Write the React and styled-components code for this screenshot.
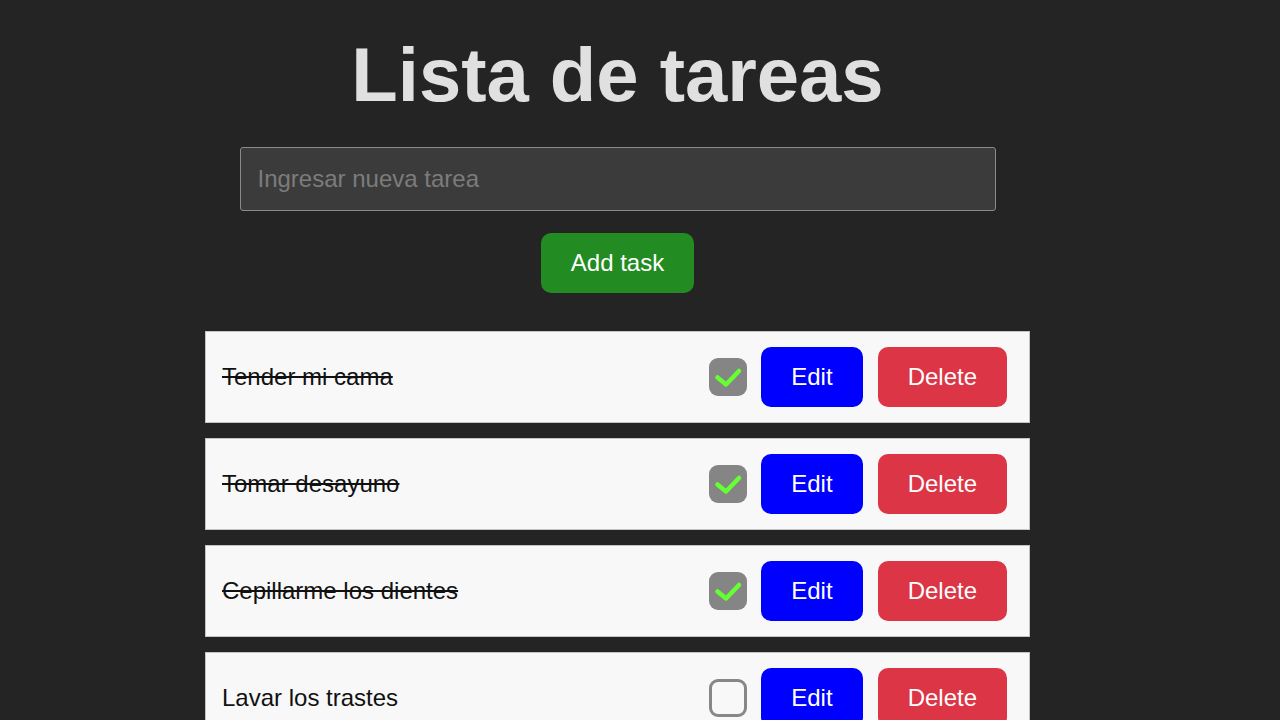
import React from 'react';
import styled, { createGlobalStyle } from 'styled-components';

const GlobalStyle = createGlobalStyle`
  body {
    margin: 0;
    background-color: #242424;
    font-family: "Liberation Sans", Arial, sans-serif;
  }
`

const Page = styled.div`
  width: 1235px;
  padding-top: 31px;
  display: flex;
  flex-direction: column;
  align-items: center;
`

const Title = styled.h1`
  margin: 0 0 29px;
  font-size: 76px;
  font-weight: bold;
  color: #e0e0e0;
  line-height: normal;
`

const TaskInput = styled.input`
  box-sizing: border-box;
  width: 756px;
  height: 64px;
  padding: 0 17px;
  background-color: #3b3b3b;
  border: 1px solid #8a8a8a;
  border-radius: 3px;
  color: #e0e0e0;
  font-family: inherit;
  font-size: 24px;
  outline: none;

  &::placeholder {
    color: #7c7c7c;
  }
`

const Button = styled.button`
  box-sizing: border-box;
  height: 60px;
  padding: 0 29px;
  border: 1px solid transparent;
  border-radius: 10px;
  background-color: ${props => props.bg};
  color: #ffffff;
  font-family: inherit;
  font-size: 24px;
  cursor: pointer;
`

const AddButton = styled(Button)`
  margin-top: 22px;
`

const TaskList = styled.ul`
  list-style: none;
  margin: 38px 0 0;
  padding: 0;
  display: flex;
  flex-direction: column;
  gap: 15px;
`

const TaskItem = styled.li`
  box-sizing: border-box;
  width: 825px;
  height: 92px;
  padding: 0 22px 0 16px;
  display: flex;
  align-items: center;
  background-color: #f8f8f8;
  border: 1px solid #c4c4c4;
`

const TaskText = styled.span`
  flex: 1;
  font-size: 24px;
  color: #111111;
  text-decoration: ${props => (props.done ? 'line-through' : 'none')};
`

const Actions = styled.div`
  display: flex;
  align-items: center;
  gap: 15px;
`

const Check = styled.div`
  box-sizing: border-box;
  width: 38px;
  height: 38px;
  margin-right: -1px;
  border-radius: 9px;
  background-color: ${props => (props.done ? '#858585' : '#f8f8f8')};
  border: ${props => (props.done ? 'none' : '3.5px solid #878787')};
  display: flex;
  align-items: center;
  justify-content: center;
`

const tasks = [
  { title: 'Tender mi cama', done: true },
  { title: 'Tomar desayuno', done: true },
  { title: 'Cepillarme los dientes', done: true },
  { title: 'Lavar los trastes', done: false }
]

function CheckBox({ done }) {
  return (
    <Check done={done}>
      {done &&
        <svg width="38" height="38" viewBox="0 0 38 38">
          <polyline points="8.5,19.5 17,26.5 30,13" fill="none" stroke="#66ff33"
            strokeWidth="4.5" strokeLinecap="round" strokeLinejoin="round" />
        </svg>
      }
    </Check>
  )
}

export default function App() {
  return (
    <Page>
      <GlobalStyle />
      <Title>Lista de tareas</Title>
      <TaskInput placeholder="Ingresar nueva tarea" />
      <AddButton bg="#228b22">Add task</AddButton>
      <TaskList>
        {tasks.map(({ title, done }, i) =>
          <TaskItem key={i}>
            <TaskText done={done}>{title}</TaskText>
            <Actions>
              <CheckBox done={done} />
              <Button bg="#0000ff">Edit</Button>
              <Button bg="#dc3545">Delete</Button>
            </Actions>
          </TaskItem>
        )}
      </TaskList>
    </Page>
  );
}
